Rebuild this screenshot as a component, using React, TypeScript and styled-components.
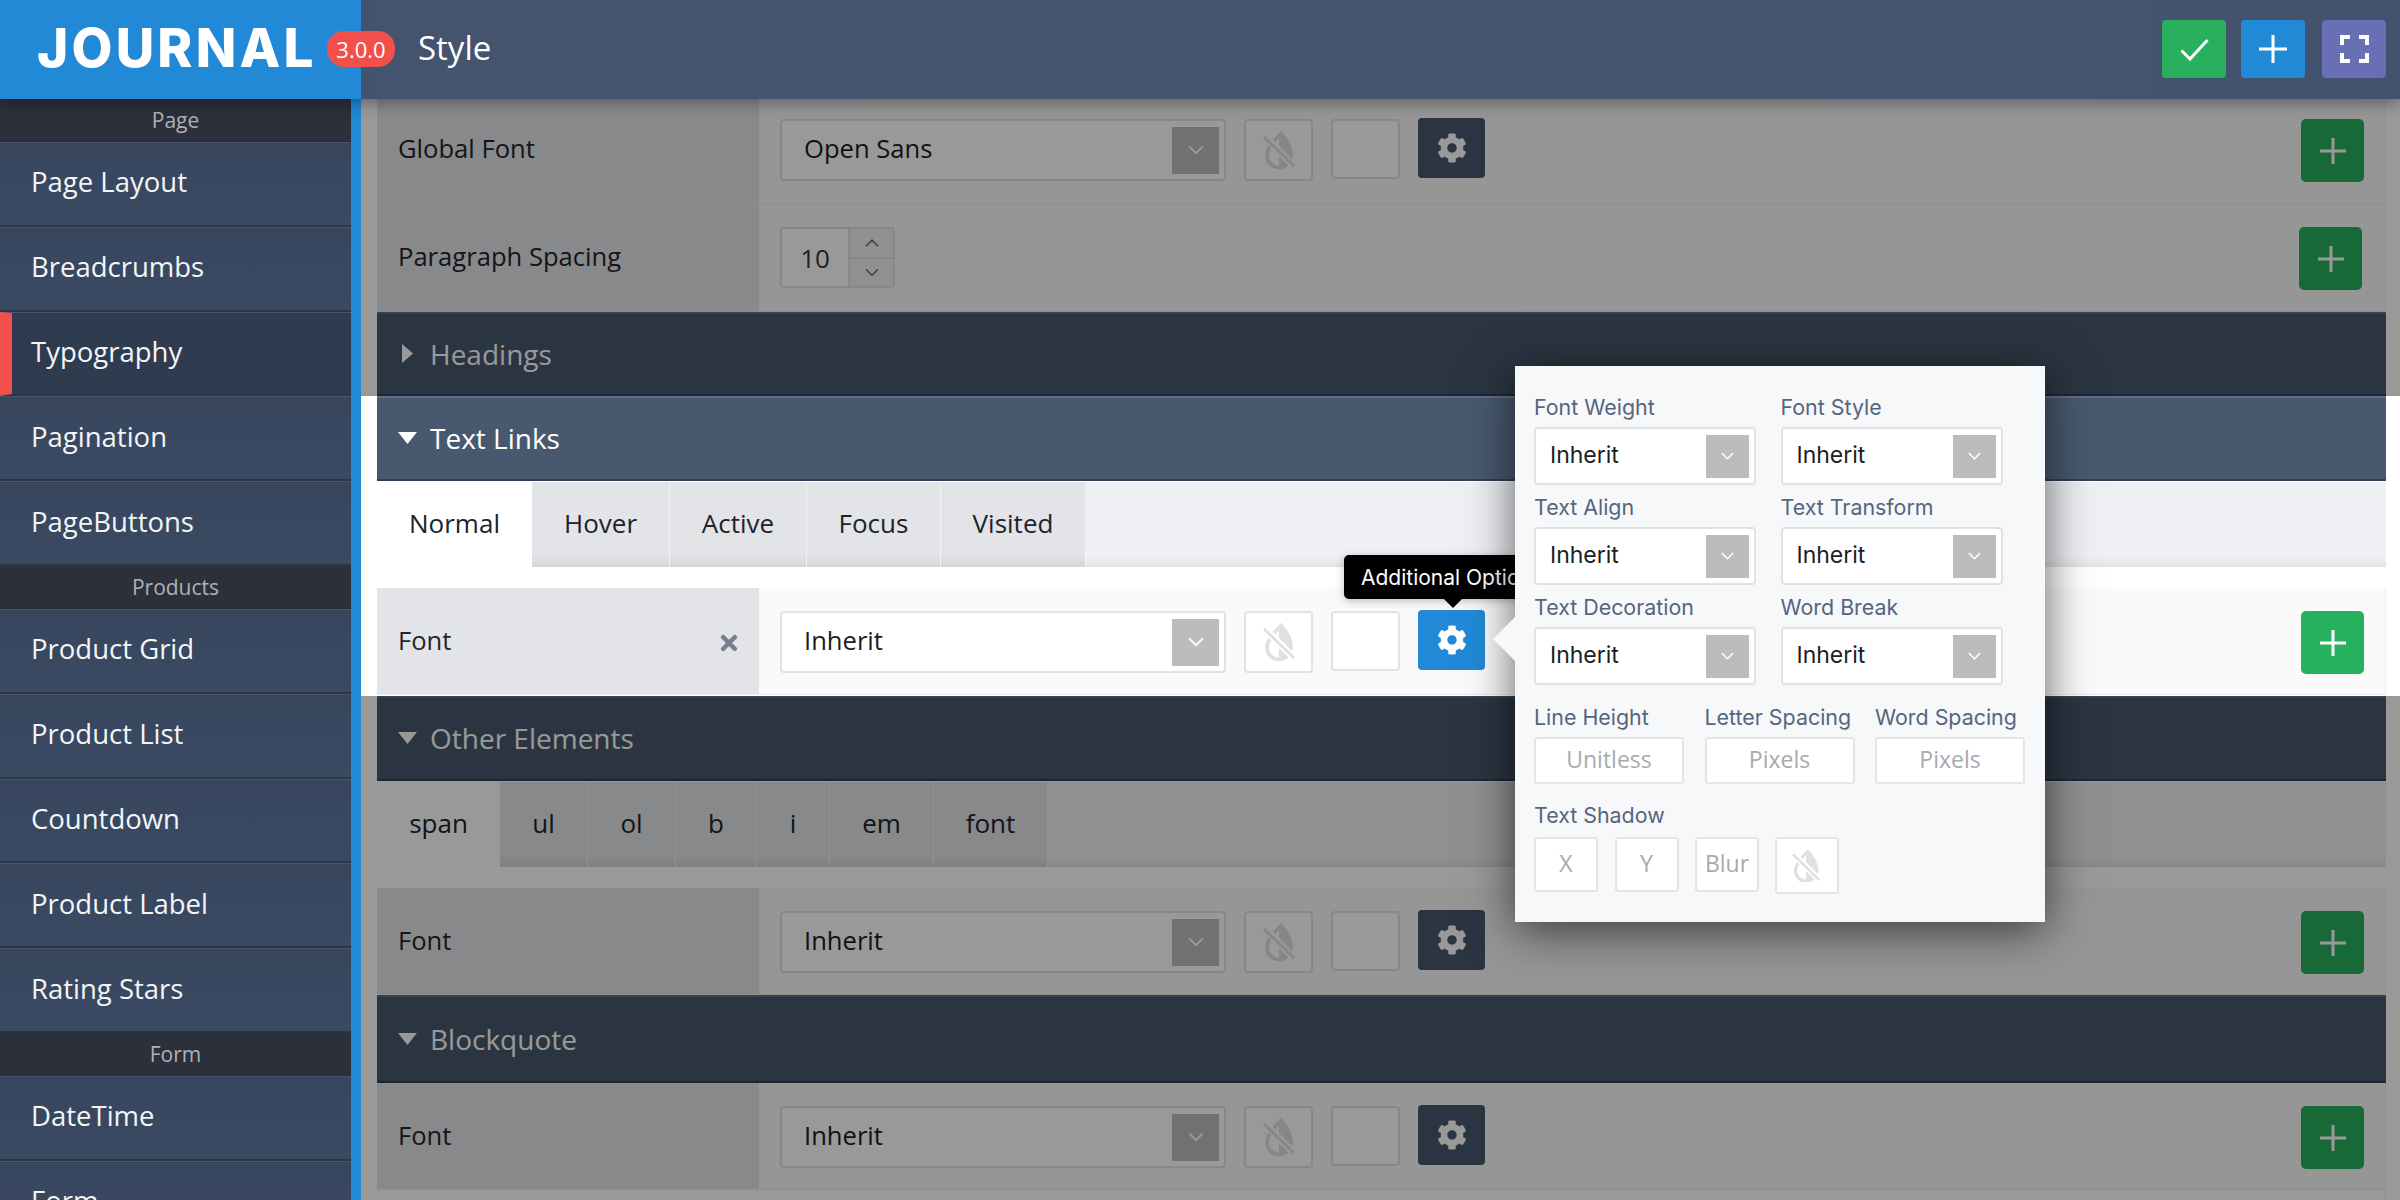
import React from "react";
import styled, { createGlobalStyle } from "styled-components";
import { FaCog, FaTimes } from "react-icons/fa";

const GlobalStyle = createGlobalStyle`
  html, body { margin: 0; padding: 0; background: #fff; overflow: hidden; }
  * { box-sizing: border-box; }
  body { font-family: "Open Sans", "Liberation Sans", sans-serif; }
`;

const Page = styled.div`
  width: 2400px;
  height: 1200px;
  display: flex;
  flex-direction: column;
  overflow: hidden;
`;

/* ---------- top bar ---------- */
const TopBar = styled.header`
  height: 99px;
  flex: none;
  display: flex;
  align-items: stretch;
  background: linear-gradient(90deg, #43536e, #46566f 60%, #43536e);
  box-shadow: 0 4px 14px rgba(0, 0, 0, 0.35);
  position: relative;
  z-index: 6;
`;
const Brand = styled.div`
  width: 361px;
  flex: none;
  background: #2189d6;
  padding-left: 37px;
  display: flex;
  align-items: center;
  position: relative;
`;
const Wordmark = styled.span`
  font-family: "Inter", "Liberation Sans", sans-serif;
  font-weight: 800;
  font-size: 53px;
  letter-spacing: 3.2px;
  color: #fff;
  line-height: 1;
  margin-top: -2px;
`;
const Version = styled.span`
  position: absolute;
  left: 327px;
  top: 31px;
  width: 68px;
  height: 36px;
  border-radius: 17px;
  background: #f3504c;
  color: #fff;
  font-size: 22px;
  line-height: 36px;
  text-align: center;
`;
const PageTitle = styled.h1`
  margin: 0 0 0 57px;
  font-weight: 400;
  font-size: 33px;
  color: #fff;
  line-height: 96px;
  flex: 1;
`;
const TopActions = styled.div`
  display: flex;
  padding: 20px 14px 0 0;
`;
const TopButton = styled.div<{ $color: string; $gap: number }>`
  width: 64px;
  height: 58px;
  margin-left: ${(p) => p.$gap}px;
  border-radius: 4px;
  background: ${(p) => p.$color};
  color: #fff;
  display: flex;
  align-items: center;
  justify-content: center;
`;

/* ---------- sidebar ---------- */
const Layout = styled.div`
  flex: 1;
  min-height: 0;
  display: flex;
`;
const Sidebar = styled.nav`
  width: 361px;
  flex: none;
  border-right: 10px solid #2189d6;
  background: #38485f;
  overflow: hidden;
`;
const NavHeading = styled.div`
  height: 43px;
  background: #2c303b;
  color: #aeb0b5;
  font-size: 21px;
  line-height: 42px;
  text-align: center;
  border-bottom: 1px solid #262b36;
`;
const NavItem = styled.div<{ $active?: boolean }>`
  height: 84.8px;
  padding: 0 0 4px ${(p) => (p.$active ? 19 : 31)}px;
  display: flex;
  align-items: center;
  font-size: 27.5px;
  color: #f4f5f7;
  background: ${(p) => (p.$active ? "#2f3b4f" : "linear-gradient(180deg, #37465d, #3a4a63)")};
  border-top: 1px solid #465670;
  border-bottom: 2px solid #2a3547;
  border-left: ${(p) => (p.$active ? "12px solid #f3504c" : "0")};
`;

/* ---------- main ---------- */
const Main = styled.main`
  flex: 1;
  min-width: 0;
  position: relative;
  background: #fff;
  padding: 0 14px 0 16px;
  overflow: hidden;
`;
const Dimmer = styled.div`
  position: absolute;
  inset: 0;
  background: rgba(0, 0, 0, 0.4);
  z-index: 1;
`;
const Focused = styled.section`
  position: relative;
  z-index: 2;
  margin: 0 -14px 0 -16px;
  padding: 0 14px 1px 16px;
  background: #fff;
`;
const RowList = styled.div`
  margin-top: -3px;
`;
const Row = styled.div<{ $h?: number }>`
  height: ${(p) => p.$h ?? 107}px;
  display: flex;
  border-bottom: 1px solid #eceded;
  border-right: 1px solid #eceded;
`;
const RowLabel = styled.div`
  width: 382px;
  flex: none;
  background: #e3e4e7;
  padding: 0 19px 2px 21px;
  display: flex;
  align-items: center;
  justify-content: space-between;
  font-size: 25.6px;
  color: #23262c;
`;
const RemoveIcon = styled.span`
  display: flex;
  color: #75808e;
  margin-top: 6px;
  margin-right: -1px;
`;
const RowValue = styled.div`
  flex: 1;
  background: #fafafa;
  padding: 23px 0 0 21px;
  display: flex;
  align-items: flex-start;
  gap: 18px;
`;
const Select = styled.div<{ $w: number; $h: number; $size: number; $pad: number; $inset: number }>`
  width: ${(p) => p.$w}px;
  height: ${(p) => p.$h}px;
  flex: none;
  background: #fff;
  border: 2px solid #e1e2e5;
  border-radius: 4px;
  display: flex;
  align-items: center;
  justify-content: space-between;
  padding: 0 ${(p) => p.$inset - 2}px 0 ${(p) => p.$pad - 2}px;
  font-size: ${(p) => p.$size}px;
  color: #1b1d22;
`;
const SelectValue = styled.span`
  margin-top: -3px;
`;
const PopSelectValue = styled.span`
  font-family: "Inter", "Liberation Sans", sans-serif;
  margin-top: -2px;
`;
const ChevronBox = styled.span<{ $box: number }>`
  width: ${(p) => p.$box}px;
  height: ${(p) => p.$box}px;
  flex: none;
  background: #bcbcbc;
  display: flex;
  align-items: center;
  justify-content: center;
`;
const IconButton = styled.div`
  width: 69px;
  height: 62px;
  flex: none;
  background: #fff;
  border: 2px solid #e1e2e5;
  border-radius: 4px;
  display: flex;
  align-items: center;
  justify-content: center;
`;
const Swatch = styled.div`
  width: 69px;
  height: 60px;
  flex: none;
  background: #fff;
  border: 2px solid #e1e2e5;
  border-radius: 4px;
`;
const GearButton = styled.div<{ $on?: boolean }>`
  width: 67px;
  height: 60px;
  flex: none;
  margin-top: -1px;
  border-radius: 4px;
  background: ${(p) => (p.$on ? "#2189d6" : "#48596f")};
  color: #fff;
  display: flex;
  align-items: center;
  justify-content: center;
`;
const AddButton = styled.div<{ $right: number }>`
  width: 63px;
  height: 63px;
  flex: none;
  margin: 0 ${(p) => p.$right}px 0 auto;
  border-radius: 5px;
  background: #27b05e;
  color: #fff;
  display: flex;
  align-items: center;
  justify-content: center;
`;
const Spinner = styled.div`
  width: 115px;
  height: 61px;
  flex: none;
  display: flex;
  border: 2px solid #e1e2e5;
  border-radius: 4px;
  overflow: hidden;
`;
const SpinValue = styled.div`
  width: 68px;
  background: #fff;
  border-right: 2px solid #e1e2e5;
  display: flex;
  align-items: center;
  justify-content: center;
  font-size: 26px;
  color: #34373d;
`;
const SpinSteps = styled.div`
  flex: 1;
  display: flex;
  flex-direction: column;
`;
const SpinStep = styled.div`
  flex: 1;
  background: #f0f1f3;
  display: flex;
  align-items: center;
  justify-content: center;
  color: #6a6d72;
  & + & {
    border-top: 2px solid #e1e2e5;
  }
`;
const SectionBar = styled.div<{ $height?: number }>`
  height: ${(p) => p.$height ?? 85}px;
  display: flex;
  align-items: center;
  gap: 13px;
  padding: 0 0 1px 21px;
  background: #48596f;
  border-top: 2px solid #5e6e85;
  border-bottom: 2px solid #333f54;
  color: #fff;
  font-size: 28px;
`;
const Caret = styled.span`
  width: 19px;
  display: flex;
  justify-content: center;
  flex: none;
`;
const TabBar = styled.div`
  height: 85px;
  margin-top: 1px;
  display: flex;
  background: linear-gradient(180deg, #eef0f4 88%, #e2e3e6);
`;
const Tab = styled.div<{ $active?: boolean; $w: number }>`
  width: ${(p) => p.$w}px;
  flex: none;
  display: flex;
  align-items: center;
  justify-content: center;
  padding-bottom: 3px;
  font-size: 26px;
  color: #20232a;
  background: ${(p) => (p.$active ? "#fff" : "linear-gradient(180deg, #e2e4e7 86%, #d3d5d8)")};
  border-right: ${(p) => (p.$active ? "0" : "1.5px solid #f1f2f4")};
`;
const TabGap = styled.div`
  height: 21px;
`;

/* ---------- overlays ---------- */
const Tooltip = styled.div`
  position: absolute;
  left: 983px;
  top: 456px;
  width: 216px;
  height: 44px;
  background: #000;
  border-radius: 5px;
  color: #fff;
  font-family: "Inter", "Liberation Sans", sans-serif;
  font-size: 21px;
  line-height: 46px;
  text-align: center;
  white-space: nowrap;
  z-index: 3;
  box-shadow: 0 2px 8px rgba(0, 0, 0, 0.25);
  &::after {
    content: "";
    position: absolute;
    left: 100px;
    top: 44px;
    border: 9px solid transparent;
    border-bottom-width: 0;
    border-top-color: #000;
  }
`;
const Popover = styled.div`
  position: absolute;
  left: 1154px;
  top: 267px;
  width: 530px;
  height: 556px;
  padding: 19px 0 0 19px;
  background: #f7f8fa;
  box-shadow: 0 8px 44px rgba(0, 0, 0, 0.62);
  z-index: 4;
  font-family: "Inter", "Liberation Sans", sans-serif;
  &::before {
    content: "";
    position: absolute;
    left: -22px;
    top: 251px;
    border-style: solid;
    border-width: 22px 22px 22px 0;
    border-color: transparent #f7f8fa transparent transparent;
  }
`;
const SelectGrid = styled.div`
  display: grid;
  grid-template-columns: 222px 222px;
  column-gap: 24.5px;
`;
const FieldLabel = styled.div`
  height: 42px;
  line-height: 44px;
  font-size: 21.4px;
  color: #55657f;
  white-space: nowrap;
`;
const UnitGrid = styled.div`
  margin-top: 10px;
  display: grid;
  grid-template-columns: 150px 150px 150px;
  column-gap: 20.5px;
`;
const TextBox = styled.div<{ $h: number; $size: number }>`
  height: ${(p) => p.$h}px;
  padding-bottom: 4px;
  background: #fff;
  border: 2px solid #e4e5e8;
  border-radius: 3px;
  display: flex;
  align-items: center;
  justify-content: center;
  font-family: "Open Sans", "Liberation Sans", sans-serif;
  font-size: ${(p) => p.$size}px;
  color: #a8aaae;
`;
const ShadowLabel = styled(FieldLabel)`
  margin-top: 11px;
  line-height: 40px;
`;
const ShadowRow = styled.div`
  display: flex;
  gap: 16.5px;
  align-items: flex-start;
`;
const ShadowBox = styled(TextBox)`
  width: 64px;
  flex: none;
`;
const DropBox = styled(ShadowBox)`
  padding-bottom: 0;
  margin-left: -1px;
`;

/* ---------- drawings ---------- */
const Chevron = ({ up = false, size = 14, color = "#fff" }: { up?: boolean; size?: number; color?: string }) => (
  <svg width={size} height={size * 0.6} viewBox="0 0 14 8" fill="none">
    <path d={up ? "M1 7l6-6 6 6" : "M1 1l6 6 6-6"} stroke={color} strokeWidth="1.6" />
  </svg>
);
const NoDrop = ({ size = 1 }: { size?: number }) => (
  <svg width={32 * size} height={38 * size} viewBox="0 0 32 38" fill="none">
    <path d="M18 2.5C13 8 4 16 4 24.5a12 12 0 0 0 24 0C28 16 23 8 18 2.5Z" stroke="#dee0e3" strokeWidth="3.6" />
    <path d="M18 2.5C23 8 28 16 28 24.5A12 12 0 0 1 16 36.500V8Z" fill="#dee0e3" />
    <path d="M2 6l29 29" stroke="#fff" strokeWidth="7" />
    <path d="M1 6l30 29" stroke="#dee0e3" strokeWidth="2.8" />
  </svg>
);
const PlusMark = ({ size = 27, weight = 3 }: { size?: number; weight?: number }) => (
  <svg width={size} height={size} viewBox={`0 0 ${size} ${size}`}>
    <path d={`M${size / 2} 0V${size}M0 ${size / 2}H${size}`} stroke="#fff" strokeWidth={weight} />
  </svg>
);
const CheckMark = () => (
  <svg width="29" height="23" viewBox="0 0 29 23" fill="none">
    <path d="M1.500 12.500 10 21 27.500 2" stroke="#fff" strokeWidth="3" />
  </svg>
);
const FullMark = () => (
  <svg width="29" height="28" viewBox="0 0 29 28" fill="none">
    <path d="M2 10V2h8M19 2h8v8M27 18v8h-8M10 26H2v-8" stroke="#fff" strokeWidth="4" />
  </svg>
);
const CaretDown = () => (
  <svg width="19" height="12" viewBox="0 0 19 12"><path d="M0 0h19L9.500 12Z" fill="#fff" /></svg>
);
const CaretRight = () => (
  <svg width="11" height="19" viewBox="0 0 11 19"><path d="M0 0l11 9.500L0 19Z" fill="#fff" /></svg>
);

/* ---------- pieces ---------- */
const RowSelect = ({ value }: { value: string }) => (
  <Select $w={446} $h={62} $size={25.6} $pad={24} $inset={7}>
    <SelectValue>{value}</SelectValue>
    <ChevronBox $box={47}><Chevron size={16} /></ChevronBox>
  </Select>
);
const Tools = ({ on }: { on?: boolean }) => (
  <>
    <IconButton><NoDrop /></IconButton>
    <Swatch />
    <GearButton $on={on}><FaCog size={30} /></GearButton>
  </>
);
const FontRow = ({ label, value, on, removable, h }: { label: string; value: string; on?: boolean; removable?: boolean; h?: number }) => (
  <Row $h={h}>
    <RowLabel>
      {label}
      {removable && <RemoveIcon><FaTimes size={24} /></RemoveIcon>}
    </RowLabel>
    <RowValue>
      <RowSelect value={value} />
      <Tools on={on} />
      <AddButton $right={21}><PlusMark size={26} /></AddButton>
    </RowValue>
  </Row>
);
const PopSelect = () => (
  <Select $w={222} $h={58} $size={23} $pad={16} $inset={7}>
    <PopSelectValue>Inherit</PopSelectValue>
    <ChevronBox $box={43}><Chevron size={13} /></ChevronBox>
  </Select>
);

const navGroups: { title: string; items: string[] }[] = [
  { title: "Page", items: ["Page Layout", "Breadcrumbs", "Typography", "Pagination", "PageButtons"] },
  { title: "Products", items: ["Product Grid", "Product List", "Countdown", "Product Label", "Rating Stars"] },
  { title: "Form", items: ["DateTime", "Form"] },
];
const linkTabs: [string, number][] = [["Normal", 155], ["Hover", 138], ["Active", 137], ["Focus", 134], ["Visited", 145]];
const elementTabs: [string, number][] = [["span", 123], ["ul", 88], ["ol", 88], ["b", 81], ["i", 73], ["em", 104], ["font", 114]];
const popFields = ["Font Weight", "Font Style", "Text Align", "Text Transform", "Text Decoration", "Word Break"];

export default function App() {
  return (
    <Page>
      <GlobalStyle />
      <TopBar>
        <Brand>
          <Wordmark>JOURNAL</Wordmark>
          <Version>3.0.0</Version>
        </Brand>
        <PageTitle>Style</PageTitle>
        <TopActions>
          <TopButton $color="#28b05e" $gap={0}><CheckMark /></TopButton>
          <TopButton $color="#2189d6" $gap={15}><PlusMark size={28} /></TopButton>
          <TopButton $color="#686fb4" $gap={17}><FullMark /></TopButton>
        </TopActions>
      </TopBar>
      <Layout>
        <Sidebar>
          {navGroups.map((g) => (
            <React.Fragment key={g.title}>
              <NavHeading>{g.title}</NavHeading>
              {g.items.map((item) => (
                <NavItem key={item} $active={item === "Typography"}>{item}</NavItem>
              ))}
            </React.Fragment>
          ))}
        </Sidebar>
        <Main>
          <Dimmer />
          <RowList>
            <FontRow label="Global Font" value="Open Sans" h={108} />
            <Row $h={108}>
              <RowLabel>Paragraph Spacing</RowLabel>
              <RowValue>
                <Spinner>
                  <SpinValue>10</SpinValue>
                  <SpinSteps>
                    <SpinStep><Chevron up size={14} color="#6a6d72" /></SpinStep>
                    <SpinStep><Chevron size={14} color="#6a6d72" /></SpinStep>
                  </SpinSteps>
                </Spinner>
                <AddButton $right={23}><PlusMark size={26} /></AddButton>
              </RowValue>
            </Row>
          </RowList>
          <SectionBar $height={84}>
            <Caret><CaretRight /></Caret>
            Headings
          </SectionBar>
          <Focused>
            <SectionBar>
              <Caret><CaretDown /></Caret>
              Text Links
            </SectionBar>
            <TabBar>
              {linkTabs.map(([t, w], i) => (
                <Tab key={t} $w={w} $active={i === 0}>{t}</Tab>
              ))}
            </TabBar>
            <TabGap />
            <FontRow label="Font" value="Inherit" on removable />
          </Focused>
          <SectionBar>
            <Caret><CaretDown /></Caret>
            Other Elements
          </SectionBar>
          <TabBar>
            {elementTabs.map(([t, w], i) => (
              <Tab key={t} $w={w} $active={i === 0}>{t}</Tab>
            ))}
          </TabBar>
          <TabGap />
          <FontRow label="Font" value="Inherit" />
          <SectionBar $height={88}>
            <Caret><CaretDown /></Caret>
            Blockquote
          </SectionBar>
          <FontRow label="Font" value="Inherit" />
          <Row />
          <Tooltip>Additional Options</Tooltip>
          <Popover>
            <SelectGrid>
              {popFields.map((f) => (
                <div key={f}>
                  <FieldLabel>{f}</FieldLabel>
                  <PopSelect />
                </div>
              ))}
            </SelectGrid>
            <UnitGrid>
              <div><FieldLabel>Line Height</FieldLabel><TextBox $h={47} $size={23}>Unitless</TextBox></div>
              <div><FieldLabel>Letter Spacing</FieldLabel><TextBox $h={47} $size={23}>Pixels</TextBox></div>
              <div><FieldLabel>Word Spacing</FieldLabel><TextBox $h={47} $size={23}>Pixels</TextBox></div>
            </UnitGrid>
            <ShadowLabel>Text Shadow</ShadowLabel>
            <ShadowRow>
              <ShadowBox $h={55} $size={23}>X</ShadowBox>
              <ShadowBox $h={55} $size={23}>Y</ShadowBox>
              <ShadowBox $h={55} $size={23}>Blur</ShadowBox>
              <DropBox $h={57} $size={23}><NoDrop size={0.88} /></DropBox>
            </ShadowRow>
          </Popover>
        </Main>
      </Layout>
    </Page>
  );
}
